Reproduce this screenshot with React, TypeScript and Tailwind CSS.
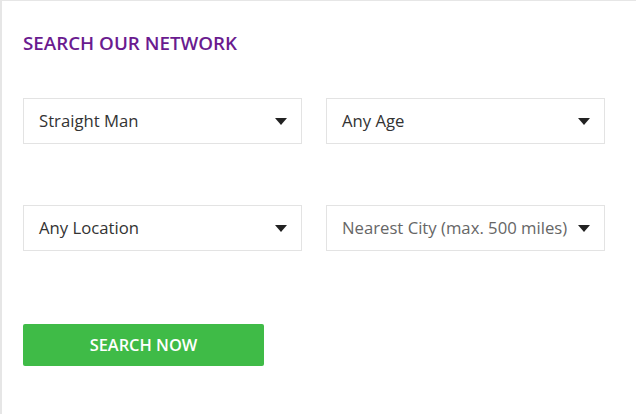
import React from "react";

const fields = [
  { label: "Straight Man", muted: false },
  { label: "Any Age", muted: false },
  { label: "Any Location", muted: false },
  { label: "Nearest City (max. 500 miles)", muted: true },
];

function Caret() {
  return (
    <svg width="12" height="7" viewBox="0 0 12 7" className="shrink-0">
      <path d="M0 0h12L6 7z" fill="#222" />
    </svg>
  );
}

function FakeSelect({ label, muted }: { label: string; muted: boolean }) {
  return (
    <div className="flex h-[46px] items-center justify-between border border-[#e3e3e3] bg-white pl-[15px] pr-[14px]">
      <span
        className={`text-[16.7px] whitespace-nowrap ${muted ? "text-[#666]" : "text-[#333]"}`}
      >
        {label}
      </span>
      <Caret />
    </div>
  );
}

export default function App() {
  return (
    <div className="h-[414px] w-[636px] bg-white font-['Open_Sans',sans-serif]">
      <div className="h-full border-l-2 border-t border-[#e6e6e6] pl-[21px] pt-[30px]">
        <h2 className="text-[18.8px] font-semibold uppercase leading-[24px] text-[#6a1b8f]">
          Search our network
        </h2>
        <div className="mt-[43px] grid w-[582px] grid-cols-2 gap-x-[24px] gap-y-[61px]">
          {fields.map((f, i) => (
            <FakeSelect key={i} label={f.label} muted={f.muted} />
          ))}
        </div>
        <button className="mt-[73px] flex h-[42px] w-[241px] items-center justify-center rounded-[2px] bg-[#3fbb47] text-[16.4px] font-semibold uppercase text-white">
          Search now
        </button>
      </div>
    </div>
  );
}
